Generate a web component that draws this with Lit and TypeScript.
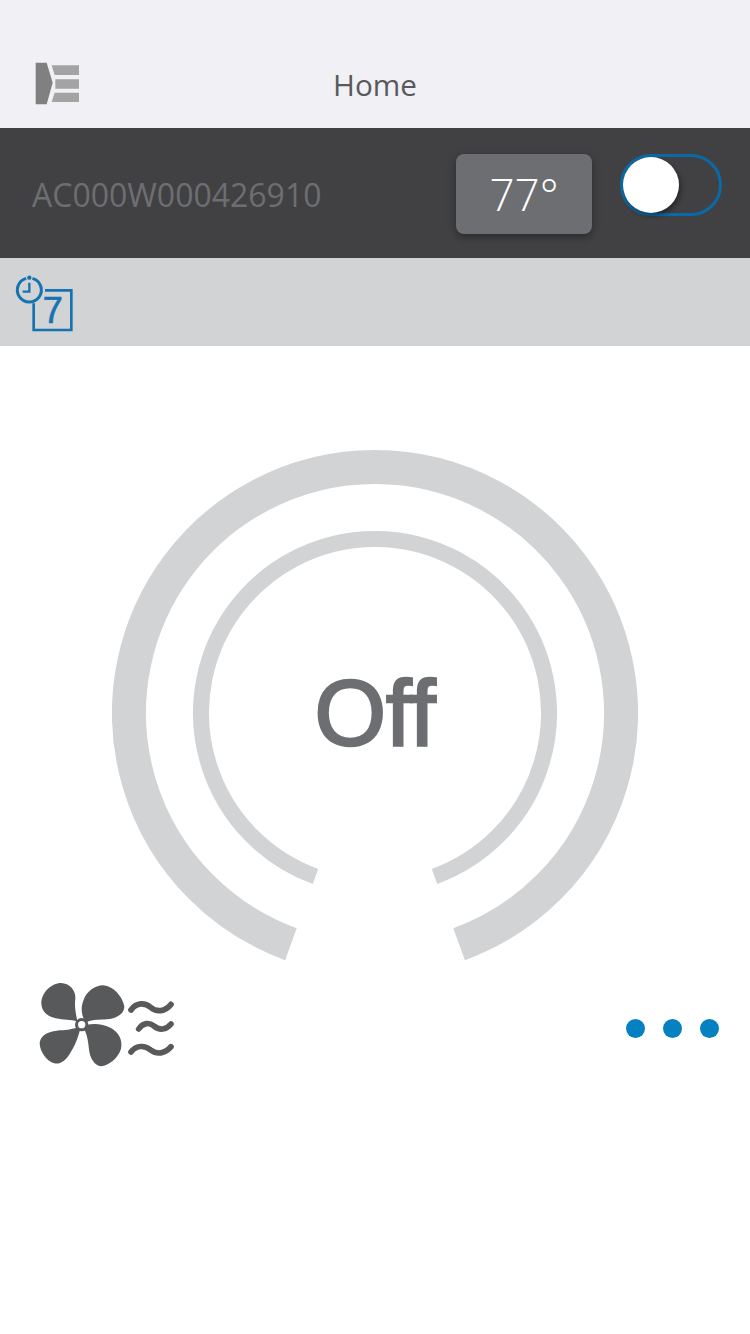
import { LitElement, html, css } from 'lit';
import { customElement, state } from 'lit/decorators.js';

@customElement('app-root')
export class AppRoot extends LitElement {
  @state() deviceName = 'AC000W000426910';
  @state() temp = 77;

  static styles = css`
    :host {
      display: block;
      width: 750px;
      min-height: 1334px;
      background: #fff;
      font-family: 'Open Sans', sans-serif;
    }

    .nav {
      height: 128px;
      box-sizing: border-box;
      padding-top: 40px;
      background: #f0f0f5;
      display: grid;
      grid-template-columns: 1fr auto 1fr;
      align-items: center;
    }
    .nav svg {
      display: block;
      margin-top: -6px;
    }
    .nav .title {
      font-size: 29.7px;
      color: #58595b;
    }

    .status {
      height: 130px;
      box-sizing: border-box;
      background: #414143;
      display: flex;
      align-items: flex-start;
      padding: 26px 28px 0 32px;
    }
    .status .name {
      flex: 1;
      font-size: 32px;
      line-height: 82px;
      color: #6d6e71;
    }
    .temp {
      width: 136px;
      height: 80px;
      border-radius: 8px;
      background: #6d6e71;
      box-shadow: 0 3px 8px rgba(0, 0, 0, 0.35);
      color: #fff;
      font-size: 44px;
      font-weight: 300;
      display: flex;
      align-items: center;
      justify-content: center;
    }
    .toggle {
      position: relative;
      width: 102px;
      height: 62px;
      box-sizing: border-box;
      margin-left: 28px;
      border: 3px solid #0a6aa8;
      border-radius: 31px;
    }
    .toggle .knob {
      position: absolute;
      left: 0;
      top: 0;
      width: 56px;
      height: 56px;
      border-radius: 50%;
      background: #fff;
      box-shadow: 2px 3px 5px rgba(0, 0, 0, 0.4);
    }

    .schedule {
      height: 88px;
      box-sizing: border-box;
      padding-top: 2px;
      background: #d1d3d4;
    }
    .schedule svg {
      display: block;
    }
    .schedule text {
      font-family: 'Liberation Sans', Arial, sans-serif;
      font-size: 108px;
      fill: #1673b1;
      stroke: #1673b1;
      stroke-width: 2px;
    }

    .main {
      padding-top: 104px;
    }
    .rings {
      display: block;
      margin: 0 auto;
    }
    .rings text {
      font-family: 'Liberation Sans', Arial, sans-serif;
      font-size: 92px;
      fill: #6d6e71;
      stroke: #6d6e71;
      stroke-width: 2.5px;
      text-anchor: middle;
    }

    .controls {
      display: flex;
      align-items: center;
      justify-content: space-between;
      margin-top: 8px;
      padding: 0 31px 0 20px;
    }
    .dots {
      display: flex;
      gap: 18px;
      margin-top: 6px;
    }
    .dots span {
      width: 19px;
      height: 19px;
      border-radius: 50%;
      background: #0581c1;
    }
  `;

  private menuIcon() {
    return html`<svg width="120" height="80" viewBox="0 0 360 240">
      <path d="M107 65H140L158 125L140 190H107Z" fill="#808080" />
      <path d="M155 73H237V102H164ZM166 115H237V143H166ZM164 155H237V183H155Z" fill="#a3a3a3" />
    </svg>`;
  }

  private scheduleIcon() {
    return html`<svg width="100" height="80" viewBox="0 0 300 240">
      <path d="M135 91H214V210H101V130" fill="none" stroke="#1673b1" stroke-width="8" />
      <path d="M97.3 55.2A36 36 0 1 1 78.7 55.2" fill="none" stroke="#1673b1" stroke-width="9" />
      <path d="M88 68V95H68" fill="none" stroke="#1673b1" stroke-width="7" />
      <circle cx="88" cy="53" r="6.5" fill="#1673b1" />
      <text x="128" y="190">7</text>
    </svg>`;
  }

  private fanIcon() {
    return html`<svg width="170" height="110" viewBox="0 0 510 330">
      <g transform="translate(45 24)">
        <g fill="#58595b">
          <path d="M127 130C122 105 118 85 121 62C123 38 105 16 78 15C50 15 22 42 19 72C18 98 35 115 62 121C85 126 108 124 127 130Z" />
          <path d="M148 127C140 108 136 90 146 65C155 42 178 22 205 22C235 24 262 55 268 85C268 108 245 122 215 124C195 126 175 124 156 132Z" />
          <path d="M156 140C180 135 205 138 228 150C250 162 264 185 258 212C250 240 222 262 198 265C178 262 165 240 162 215C160 195 158 175 150 158Z" />
          <path d="M135 156C128 180 122 200 104 228C92 248 75 260 58 256C35 250 14 220 14 195C16 172 40 160 65 158C90 156 110 156 126 148Z" />
          <circle cx="140" cy="140" r="20" />
        </g>
        <circle cx="140" cy="140" r="11" fill="#fff" />
      </g>
      <g fill="none" stroke="#58595b" stroke-width="17" stroke-linecap="round">
        <path d="M333 120C350 96 375 98 392 112C410 128 435 125 453 103" />
        <path d="M356 177C370 157 388 157 402 168C418 182 438 180 453 162" />
        <path d="M333 246C350 224 375 226 392 240C410 254 435 252 453 230" />
      </g>
    </svg>`;
  }

  render() {
    return html`
      <div class="nav">
        <div>${this.menuIcon()}</div>
        <div class="title">Home</div>
        <div></div>
      </div>
      <div class="status">
        <div class="name">${this.deviceName}</div>
        <div class="temp">${this.temp}°</div>
        <div class="toggle"><div class="knob"></div></div>
      </div>
      <div class="schedule">${this.scheduleIcon()}</div>
      <div class="main">
        <svg class="rings" width="526" height="512" viewBox="112 450 526 512">
          <path d="M290.9 944.2A246 246 0 1 1 459.1 944.2" fill="none" stroke="#d1d3d4" stroke-width="34" />
          <path d="M315.5 876.5A174 174 0 1 1 434.5 876.5" fill="none" stroke="#d1d3d4" stroke-width="16" />
          <text x="375" y="745">Off</text>
        </svg>
        <div class="controls">
          ${this.fanIcon()}
          <div class="dots"><span></span><span></span><span></span></div>
        </div>
      </div>
    `;
  }
}
